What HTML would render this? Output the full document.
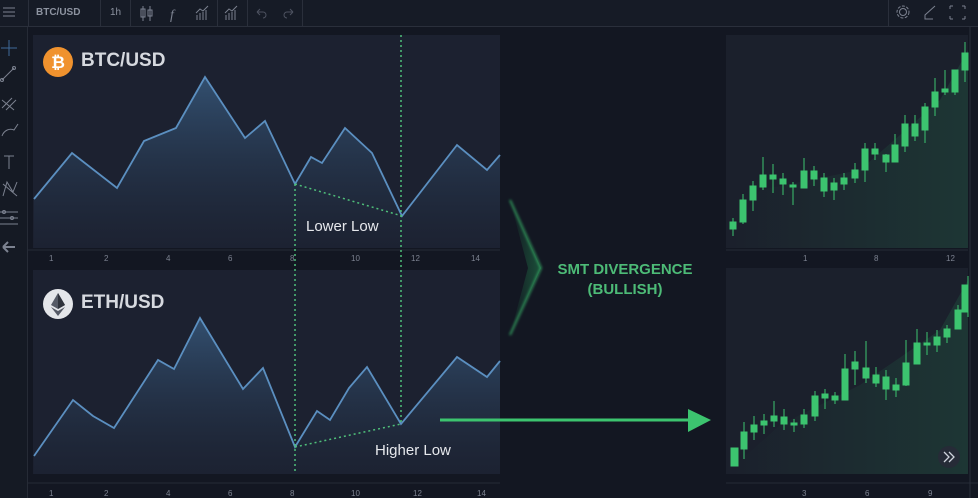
<!DOCTYPE html>
<html><head><meta charset="utf-8"><style>
*{margin:0;padding:0;box-sizing:border-box}
body{width:978px;height:498px;background:#131722;overflow:hidden;font-family:"Liberation Sans","DejaVu Sans",sans-serif;position:relative}
.top{position:absolute;left:0;top:0;width:978px;height:27px;background:#161b26;border-bottom:1px solid #2a2f3b}
.side{position:absolute;left:0;top:27px;width:28px;height:471px;background:#151a24;border-right:1px solid #262b36}
.t{position:absolute;color:#8d93a0;font-size:11px}
.sep{position:absolute;top:0;width:1px;height:27px;background:#2a2f3b}
.ax{position:absolute;color:#7c8290;font-size:8px}
</style></head><body>
<div class="top"></div>
<div class="side"></div>
<div class="sep" style="left:28px"></div>
<div class="sep" style="left:100px"></div>
<div class="sep" style="left:130px"></div>
<div class="sep" style="left:217px"></div>
<div class="sep" style="left:247px"></div>
<div class="sep" style="left:302px"></div>
<div class="sep" style="left:888px"></div>
<div class="t" style="left:36px;top:7px;font-weight:bold;font-size:10px">BTC/USD</div>
<div class="t" style="left:110px;top:7px;font-size:10px">1h</div>
<svg style="position:absolute;left:0;top:0" width="978" height="498">
<defs>
<linearGradient id="bf" x1="0" y1="0" x2="0" y2="1"><stop offset="0" stop-color="#3a5f85" stop-opacity=".75"/><stop offset="1" stop-color="#1d2536" stop-opacity=".3"/></linearGradient>
<linearGradient id="gf" x1="0" y1="0" x2="1" y2="0"><stop offset="0" stop-color="#2bbd66" stop-opacity="0"/><stop offset="1" stop-color="#2bbd66" stop-opacity=".14"/></linearGradient>
<linearGradient id="ch" x1="0" y1="0" x2="1" y2="0"><stop offset="0" stop-color="#2bbd66" stop-opacity="0"/><stop offset="1" stop-color="#2bbd66" stop-opacity=".35"/></linearGradient>
<filter id="gl"><feGaussianBlur stdDeviation="1.2"/></filter>
</defs>
<g stroke="#7c8290" fill="none" stroke-width="1">
<path d="M3 8h12M3 12h12M3 16h12"/>
<path d="M143 6v15M150 6v15"/><rect x="141" y="9" width="4" height="8"/><rect x="148" y="10" width="4" height="6"/>
<path d="M197 20v-5M200 20v-7M203 20v-8M206 20v-10M196 13l4-4 3 2 5-5"/>
<path d="M226 20v-5M229 20v-7M232 20v-8M235 20v-10M225 13l4-4 3 2 5-5"/>
<path d="M257 12h6a3 3 0 0 1 0 6M257 12l3-3M257 12l3 3" stroke="#4d5260"/>
<path d="M293 12h-6a3 3 0 0 0 0 6M293 12l-3-3M293 12l-3 3" stroke="#4d5260"/>
<circle cx="903" cy="12" r="3.5"/><circle cx="903" cy="12" r="6" stroke-dasharray="3 1.5"/>
<path d="M935 6l-10 9v4h8"/>
<path d="M950 6h3M950 6v3M965 6h-3M965 6v3M950 19h3M950 19v-3M965 19h-3M965 19v-3"/>
<path d="M1 48h16M9 40v16" stroke="#3e6a9a"/>
<path d="M2 80l12-12"/><circle cx="2" cy="80" r="1.5"/><circle cx="14" cy="68" r="1.5"/>
<path d="M2 108l10-10M6 110l10-10M2 100l12 10"/>
<path d="M2 136c2-6 8-8 12-6l4-6"/>
<path d="M4 156h10M9 156v13"/>
<path d="M3 196l4-14 6 10 4-10M3 184l14 12"/>
<path d="M0 212h18M0 218h18M0 224h18"/><circle cx="4" cy="212" r="1.5"/><circle cx="12" cy="218" r="1.5"/>
<path d="M3 247h12M3 247l5-5M3 247l5 5" stroke-width="2"/>
</g>
<text x="170" y="19" fill="#7c8290" font-size="14" font-style="italic" font-family="Liberation Serif">f</text>
<rect x="33" y="35" width="467" height="213" fill="#1c2130"/>
<rect x="33" y="270" width="467" height="204" fill="#1c2130"/>
<rect x="726" y="35" width="242" height="213" fill="#1b202c"/>
<rect x="726" y="268" width="242" height="206" fill="#1b202c"/>
<line x1="28" y1="250" x2="500" y2="250" stroke="#262b36"/>
<line x1="28" y1="483" x2="500" y2="483" stroke="#262b36"/>
<line x1="726" y1="250" x2="968" y2="250" stroke="#262b36"/>
<line x1="726" y1="483" x2="978" y2="483" stroke="#262b36"/>
<line x1="970" y1="27" x2="970" y2="498" stroke="#2a2f3b"/>
<path d="M34 199L72 153 117 188 144 141 176 128 205 77 245 138 265 121 295 184 311 157 322 163 345 128 372 153 402 216 457 145 487 170 500 155V248H34Z" fill="url(#bf)"/>
<path d="M34 199L72 153 117 188 144 141 176 128 205 77 245 138 265 121 295 184 311 157 322 163 345 128 372 153 402 216 457 145 487 170 500 155" fill="none" stroke="#5b8fc0" stroke-width="1.8"/>
<path d="M34 456L73 400 93 416 114 428 158 360 174 369 200 318 243 389 263 368 295 447 317 411 330 420 349 388 367 367 401 424 457 357 487 377 500 361V474H34Z" fill="url(#bf)"/>
<path d="M34 456L73 400 93 416 114 428 158 360 174 369 200 318 243 389 263 368 295 447 317 411 330 420 349 388 367 367 401 424 457 357 487 377 500 361" fill="none" stroke="#5b8fc0" stroke-width="1.8"/>
<g stroke="#4fbf7a" stroke-width="1.5" stroke-dasharray="2 3" fill="none">
<path d="M295 184V474M401 35V424"/>
<path d="M295 184L402 216M295 447L401 424"/>
</g>
<path d="M510 200L541 268 510 335 528 268Z" fill="url(#ch)"/>
<path d="M510 200L541 268 510 335" fill="none" stroke="#3cc46f" stroke-width="2" stroke-opacity=".7" filter="url(#gl)"/>
<path d="M440 420H692" stroke="#3cc46f" stroke-width="3"/>
<path d="M688 409L711 420 688 432Z" fill="#3cc46f"/>
<path d="M730 240L760 190 860 170 940 100 968 50V248H730Z" fill="url(#gf)"/>
<path d="M730 470L780 425 860 385 940 330 968 280V474H730Z" fill="url(#gf)"/>
<g fill="#3cc46f" stroke="#3cc46f" stroke-width="1">
<path d="M733 218V236M743 194V224M753 181V211M763 157V190M773 164V193M783 173V195M793 182V205M804 158V188M814 166V186M824 173V197M834 178V200M844 173V190M855 163V183M865 143V182M875 143V160M886 154V172M895 134V162M905 115V152M915 115V141M925 103V143M935 78V116M945 70V95M955 70V95M965 42V82"/>
<rect x="730" y="222" width="6" height="7"/><rect x="740" y="200" width="6" height="22"/><rect x="750" y="186" width="6" height="14"/><rect x="760" y="175" width="6" height="12"/><rect x="770" y="175" width="6" height="4"/><rect x="780" y="179" width="6" height="5"/><rect x="790" y="185" width="6" height="2"/><rect x="801" y="171" width="6" height="17"/><rect x="811" y="171" width="6" height="8"/><rect x="821" y="178" width="6" height="13"/><rect x="831" y="183" width="6" height="7"/><rect x="841" y="178" width="6" height="6"/><rect x="852" y="170" width="6" height="8"/><rect x="862" y="149" width="6" height="21"/><rect x="872" y="149" width="6" height="5"/><rect x="883" y="155" width="6" height="7"/><rect x="892" y="145" width="6" height="17"/><rect x="902" y="124" width="6" height="22"/><rect x="912" y="124" width="6" height="12"/><rect x="922" y="107" width="6" height="23"/><rect x="932" y="92" width="6" height="15"/><rect x="942" y="89" width="6" height="3"/><rect x="952" y="70" width="6" height="22"/><rect x="962" y="53" width="6" height="17"/>
<path d="M744 422V459M754 416V440M764 414V434M774 401V427M784 409V430M794 419V432M804 409V428M815 391V421M825 389V409M835 392V404M845 354V400M855 351V385M866 341V383M876 367V387M886 370V400M896 378V397M906 340V386M917 329V364M927 332V355M937 330V352M947 325V343M958 305V329M968 276V317"/>
<rect x="731" y="448" width="7" height="18"/><rect x="741" y="432" width="6" height="17"/><rect x="751" y="425" width="6" height="7"/><rect x="761" y="421" width="6" height="4"/><rect x="771" y="416" width="6" height="5"/><rect x="781" y="417" width="6" height="7"/><rect x="791" y="423" width="6" height="2"/><rect x="801" y="415" width="6" height="9"/><rect x="812" y="396" width="6" height="20"/><rect x="822" y="394" width="6" height="4"/><rect x="832" y="396" width="6" height="4"/><rect x="842" y="369" width="6" height="31"/><rect x="852" y="362" width="6" height="7"/><rect x="863" y="368" width="6" height="10"/><rect x="873" y="375" width="6" height="8"/><rect x="883" y="377" width="6" height="12"/><rect x="893" y="385" width="6" height="5"/><rect x="903" y="363" width="6" height="22"/><rect x="914" y="343" width="6" height="21"/><rect x="924" y="343" width="6" height="2"/><rect x="934" y="337" width="6" height="8"/><rect x="944" y="329" width="6" height="8"/><rect x="955" y="310" width="6" height="19"/><rect x="962" y="285" width="6" height="27"/>
</g>
<circle cx="949" cy="457" r="11" fill="#262b37"/>
<path d="M944 452l5 5-5 5M949 452l5 5-5 5" stroke="#cfd3dc" stroke-width="1.3" fill="none"/>
<circle cx="58" cy="62" r="15" fill="#f0922e"/>
<text x="58" y="68" fill="#fff" font-size="17" font-weight="bold" text-anchor="middle">₿</text>
<circle cx="58" cy="304" r="15" fill="#e4e6ea"/>
<path d="M58 293L51 305 58 309 65 305Z" fill="#555a66"/><path d="M58 293L58 309 65 305Z" fill="#2f333c"/><path d="M51 307L58 316 65 307 58 311Z" fill="#555a66"/>
</svg>
<div class="t" style="left:81px;top:50px;font-size:19px;font-weight:bold;color:#d6d9df">BTC/USD</div>
<div class="t" style="left:81px;top:292px;font-size:19px;font-weight:bold;color:#d6d9df">ETH/USD</div>
<div class="t" style="left:306px;top:218px;font-size:15px;color:#e6e8ec">Lower Low</div>
<div class="t" style="left:375px;top:442px;font-size:15px;color:#e6e8ec">Higher Low</div>
<div class="t" style="left:540px;top:260px;width:170px;text-align:center;font-size:15px;font-weight:bold;color:#4dbb77;line-height:20px">SMT DIVERGENCE<br>(BULLISH)</div>
<div class="ax" style="left:49px;top:254px">1</div><div class="ax" style="left:104px;top:254px">2</div><div class="ax" style="left:166px;top:254px">4</div><div class="ax" style="left:228px;top:254px">6</div><div class="ax" style="left:290px;top:254px">8</div><div class="ax" style="left:351px;top:254px">10</div><div class="ax" style="left:411px;top:254px">12</div><div class="ax" style="left:471px;top:254px">14</div>
<div class="ax" style="left:49px;top:489px">1</div><div class="ax" style="left:104px;top:489px">2</div><div class="ax" style="left:166px;top:489px">4</div><div class="ax" style="left:228px;top:489px">6</div><div class="ax" style="left:290px;top:489px">8</div><div class="ax" style="left:351px;top:489px">10</div><div class="ax" style="left:413px;top:489px">12</div><div class="ax" style="left:477px;top:489px">14</div>
<div class="ax" style="left:803px;top:254px">1</div><div class="ax" style="left:874px;top:254px">8</div><div class="ax" style="left:946px;top:254px">12</div>
<div class="ax" style="left:802px;top:489px">3</div><div class="ax" style="left:865px;top:489px">6</div><div class="ax" style="left:928px;top:489px">9</div>
</body></html>
